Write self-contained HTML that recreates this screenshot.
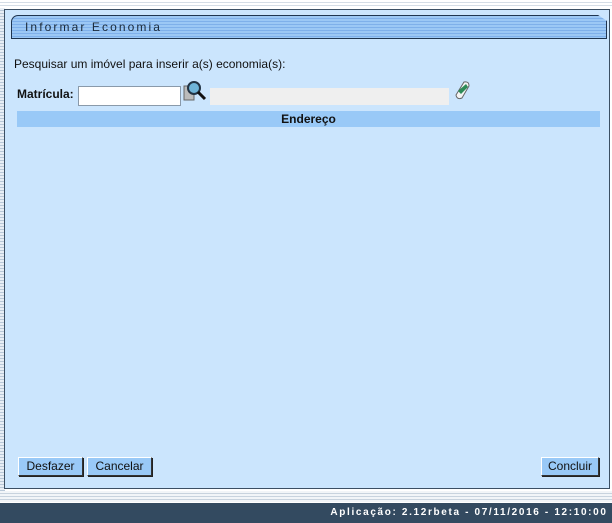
<!DOCTYPE html>
<html><head><style>
body{margin:0;width:612px;height:523px;overflow:hidden;background:#fff;font-family:"Liberation Sans",Arial,sans-serif;position:relative}
.stripeL{position:absolute;left:0;top:8px;width:5px;height:484px;background:repeating-linear-gradient(#e8eef5 0 2px,#b9c8d8 2px 3px)}
.panel{position:absolute;left:4px;top:9px;width:604px;height:478px;background:#cbe5fd;border:1px solid #3c4f63}
.title{position:absolute;left:11px;top:15px;width:594px;height:22px;border:1px solid #1f3550;border-radius:7px 0 0 0;background:repeating-linear-gradient(#9cc8f5 0 2px,#7fb0ea 2px 3px);clip-path:polygon(0 0,98.5% 0,100% 6px,100% 100%,0 100%)}
.title span{position:absolute;left:13px;top:4px;font-size:12px;letter-spacing:2.1px;color:#1b2a3a}
.t{position:absolute;font-size:12px;color:#111}
.btn{position:absolute;top:457px;height:17px;background:#99c9f7;border:1px solid #333;border-top-color:#fff;border-left-color:#fff;box-shadow:1px 1px 0 #222;font-size:12px;line-height:17px;text-align:center;color:#111}
.foot{position:absolute;left:0;top:503px;width:612px;height:20px;background:#334a60;color:#fff;font-size:10px;font-weight:bold;letter-spacing:1.65px;text-align:right;line-height:20px}
</style></head><body>
<div style="position:absolute;left:0;top:2px;width:612px;height:1px;background:#d5dde6"></div>
<div style="position:absolute;left:0;top:5px;width:612px;height:1px;background:#d5dde6"></div>
<div class="stripeL"></div>
<div class="panel"></div>
<div class="title"><span>Informar Economia</span></div>
<div class="t" style="left:14px;top:57px">Pesquisar um imóvel para inserir a(s) economia(s):</div>
<div class="t" style="left:17px;top:87px;font-weight:bold">Matrícula:</div>
<div style="position:absolute;left:78px;top:86px;width:101px;height:18px;background:#fff;border:1px solid #8a9aaa"></div>
<svg style="position:absolute;left:183px;top:80px" width="26" height="24" viewBox="0 0 26 24"><rect x="1" y="6" width="10" height="14" fill="#bbb" stroke="#666"/><circle cx="11" cy="8" r="6" fill="#6fb4d8" stroke="#234" stroke-width="2"/><line x1="15" y1="12" x2="22" y2="19" stroke="#111" stroke-width="3"/></svg>
<div style="position:absolute;left:210px;top:88px;width:239px;height:17px;background:#efefef"></div>
<svg style="position:absolute;left:452px;top:79px" width="20" height="22" viewBox="0 0 20 22"><path d="M4 16 L12 3 Q17 2 17 7 L10 19 Q5 21 4 16Z" fill="#f4f4f4" stroke="#666"/><path d="M6 12 L14 5 L16 8 L9 15Z" fill="#2e8b57"/></svg>
<div style="position:absolute;left:17px;top:111px;width:583px;height:16px;background:#99c9f7;font-size:12px;font-weight:bold;text-align:center;line-height:16px;color:#111">Endereço</div>
<div class="btn" style="left:18px;width:63px">Desfazer</div>
<div class="btn" style="left:87px;width:63px">Cancelar</div>
<div class="btn" style="left:541px;width:56px">Concluir</div>
<div style="position:absolute;left:0;top:491px;width:612px;height:11px;background:repeating-linear-gradient(#f2f5f8 0 2px,#c8d3de 2px 3px)"></div>
<div class="foot">Aplicação: 2.12rbeta - 07/11/2016 - 12:10:00&nbsp;</div>
</body></html>
